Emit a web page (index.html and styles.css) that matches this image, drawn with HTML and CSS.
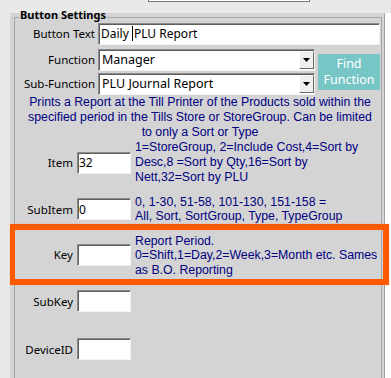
FILE: index.html
```html
<!DOCTYPE html>
<html lang="en">
<head>
    <meta charset="UTF-8">
    <meta name="viewport" content="width=device-width, initial-scale=1.0">
    <title>Button Settings</title>
    <link rel="stylesheet" href="styles.css">
</head>
<body>
    <div class="strip"><div class="prev-field"></div></div>
    <div class="frame">
        <div class="panel">
            <fieldset class="group">
                <legend>Button Settings</legend>

                <div class="top-grid">
                    <label class="lbl l1">Button Text</label>
                    <div class="field f1">Daily <span class="caret"></span>PLU Report</div>

                    <label class="lbl l2">Function</label>
                    <div class="combo c1">
                        <span>Manager</span>
                        <span class="drop"><svg width="7" height="4" viewBox="0 0 7 4"><path d="M0 0h7L3.5 4z" fill="#000"/></svg></span>
                    </div>
                    <button class="find" type="button">Find<br>Function</button>

                    <label class="lbl l3">Sub-Function</label>
                    <div class="combo c2">
                        <span>PLU Journal Report</span>
                        <span class="drop"><svg width="7" height="4" viewBox="0 0 7 4"><path d="M0 0h7L3.5 4z" fill="#000"/></svg></span>
                    </div>
                </div>

                <p class="note">Prints a Report at the Till Printer of the Products sold within the<br>specified period in the Tills Store or StoreGroup. Can be limited<br>to only a Sort or Type</p>

                <div class="row row-item">
                    <label class="lbl" for="item">Item</label>
                    <input id="item" type="text" value="32">
                    <div class="desc">1=StoreGroup, 2=Include Cost,4=Sort by<br>Desc,8 =Sort by Qty,16=Sort by<br>Nett,32=Sort by PLU</div>
                </div>

                <div class="row row-subitem">
                    <label class="lbl" for="subitem">SubItem</label>
                    <input id="subitem" type="text" value="0">
                    <div class="desc">0, 1-30, 51-58, 101-130, 151-158 =<br>All, Sort, SortGroup, Type, TypeGroup</div>
                </div>

                <div class="key-box">
                    <div class="row row-key">
                        <label class="lbl" for="key">Key</label>
                        <input id="key" type="text" value="">
                        <div class="desc">Report Period.<br>0=Shift,1=Day,2=Week,3=Month etc. Sames<br>as B.O. Reporting</div>
                    </div>
                </div>

                <div class="row row-subkey">
                    <label class="lbl" for="subkey">SubKey</label>
                    <input id="subkey" type="text" value="">
                </div>

                <div class="row row-device">
                    <label class="lbl" for="device">DeviceID</label>
                    <input id="device" type="text" value="">
                </div>
            </fieldset>
        </div>
    </div>
</body>
</html>
```

FILE: styles.css
```css
body {
    margin: 0;
    background: #fff;
    overflow: hidden;
    font-family: "Noto Sans", sans-serif;
    color: #000;
}

.strip {
    height: 13px;
    background: #e9e9e9;
}

.prev-field {
    margin-left: 148px;
    width: 160px;
    height: 1px;
    background: #fff;
    border: 1px solid #7a7a7a;
    border-top: 0;
}

.frame {
    display: flex;
    width: 375px;
    padding-left: 10px;
    background: #e9e9e9;
}

.panel {
    display: flow-root;
    width: 375px;
    height: 365px;
    box-sizing: border-box;
    background: #d4d4d4;
    border-right: 1px solid #a0a0a0;
}

.group {
    margin: -4px 0 0 4px;
    padding: 0;
    width: 368px;
    min-height: 369px;
    box-sizing: border-box;
    border: 1px solid #a6a6a6;
    border-bottom: 0;
}

.group legend {
    margin-left: 4px;
    padding: 0 1px 4px;
    font-size: 11px;
    line-height: 12px;
    font-weight: bold;
}

.lbl {
    font-size: 11.5px;
    text-align: right;
}

/* top block */
.top-grid {
    display: grid;
    grid-template-columns: 80px 217px 62px;
    grid-template-rows: 26px 24px 22px;
    grid-template-areas:
        "l1 f1 f1"
        "l2 c1 btn"
        "l3 c2 btn";
    column-gap: 3px;
    align-items: start;
    margin-top: -2px;
}

.top-grid .lbl {
    line-height: 22px;
}

.l1 { grid-area: l1; }
.l2 { grid-area: l2; }
.l3 { grid-area: l3; }
.f1 { grid-area: f1; }
.c1 { grid-area: c1; }
.c2 { grid-area: c2; }

.field,
.combo,
.row input {
    height: 22px;
    box-sizing: border-box;
    background: #fff;
    border: 1px solid;
    border-color: #8c8c8c #f2f2f2 #f2f2f2 #8c8c8c;
    box-shadow: inset 1px 1px 0 #5e5e5e;
}

.field {
    padding-left: 2px;
    font-size: 12px;
    line-height: 20px;
    white-space: pre;
}

.caret {
    display: inline-block;
    width: 1px;
    height: 15px;
    margin-right: 1px;
    background: #000;
    vertical-align: -3px;
}

.combo {
    display: flex;
    justify-content: space-between;
    padding-left: 3px;
    font-size: 12.5px;
    line-height: 20px;
}

.drop {
    display: flex;
    align-items: center;
    justify-content: center;
    width: 15px;
    margin: 1px 0;
    box-sizing: border-box;
    background: #f0f0f0;
    border: 1px solid;
    border-color: #fff #6b6b6b #6b6b6b #fff;
}

.find {
    grid-area: btn;
    align-self: center;
    width: 62px;
    height: 36px;
    padding: 0;
    border: 0;
    background: #77c6c6;
    color: #fff;
    font-family: "Noto Sans", sans-serif;
    font-size: 12.5px;
    line-height: 16px;
}

.note {
    margin: 0;
    padding-left: 4px;
    color: #000080;
    font-family: "Liberation Sans", Arial, sans-serif;
    font-size: 12.3px;
    line-height: 15px;
    text-align: center;
    white-space: nowrap;
}

/* lower rows */
.row {
    display: grid;
    grid-template-columns: 58px 54px 1fr;
    column-gap: 4px;
    align-items: center;
}

.row input {
    width: 54px;
    padding: 0 1px;
    font-family: "Noto Sans", sans-serif;
    font-size: 12px;
    outline: none;
}

.desc {
    color: #000080;
    font-family: "Liberation Sans", Arial, sans-serif;
    font-size: 12.3px;
    line-height: 15px;
    white-space: nowrap;
}

.row-subitem {
    margin-top: 10px;
}

.row-subitem .desc {
    line-height: 14px;
}

.key-box {
    margin: 1px -8px 0 -5px;
    border: 6px solid #ff5a00;
    border-left-width: 5px;
    box-shadow: 0 0 1px #ff9a66;
}

.row-key {
    height: 49px;
}

.row-key .desc {
    padding-top: 2px;
    line-height: 14.5px;
}

.row-subkey {
    margin-top: 5px;
}

.row-device {
    margin-top: 26px;
}
```
